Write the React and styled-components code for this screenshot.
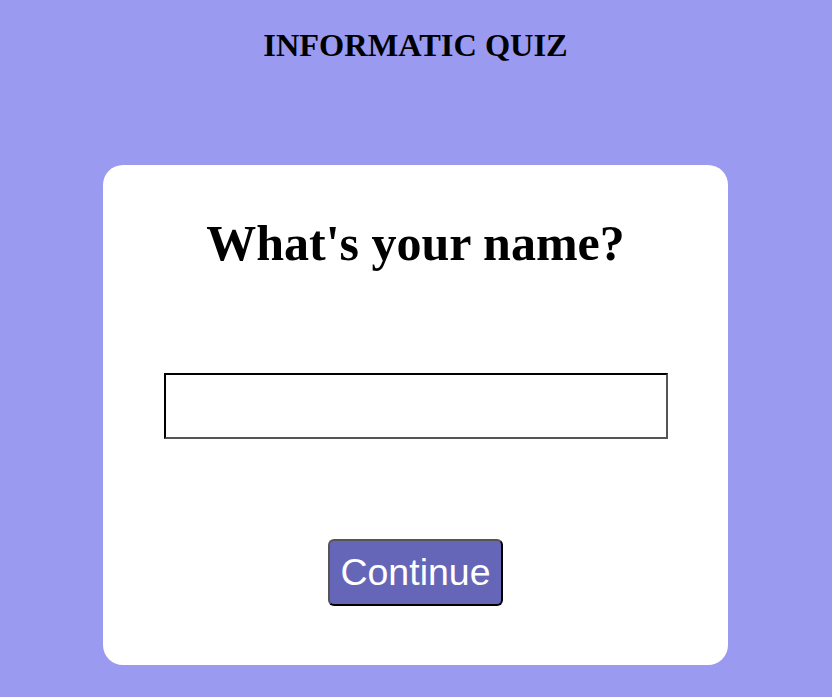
import React, { useState } from "react";
import styled, { createGlobalStyle } from "styled-components";

const GlobalStyle = createGlobalStyle`
  html, body {
    margin: 0;
    padding: 0;
    background: #999af0;
  }
  body {
    font-family: "Liberation Serif", "Times New Roman", serif;
  }
`;

const Page = styled.div`
  min-height: 697px;
  padding-right: 1px;
  box-sizing: border-box;
  display: flex;
  flex-direction: column;
  align-items: center;
`;

const Title = styled.h1`
  margin: 27px 0 0;
  font-size: 32.4px;
  font-weight: 700;
  line-height: 37px;
  color: #000;
`;

const Card = styled.div`
  margin-top: 101px;
  width: 625px;
  height: 500px;
  box-sizing: border-box;
  background: #fff;
  border-radius: 20px;
  display: flex;
  flex-direction: column;
  align-items: center;
`;

const Question = styled.h2`
  margin: 49px 0 0;
  font-size: 50px;
  line-height: 58px;
  font-weight: 700;
`;

const NameInput = styled.input`
  margin-top: 101px;
  width: 504px;
  height: 66px;
  box-sizing: border-box;
  border: 2px solid #555;
  border-top-color: #000;
  border-left-color: #000;
  font-size: 28px;
  padding: 0 10px;
  outline: none;
`;

const ContinueButton = styled.button`
  margin-top: 100px;
  height: 67px;
  padding: 0 10px;
  box-sizing: border-box;
  background: #6666b8;
  color: #fff;
  font-family: "Liberation Sans", Arial, sans-serif;
  font-size: 37.5px;
  border: 2px solid #000;
  border-top-color: #555;
  border-left-color: #555;
  border-radius: 6px;
  cursor: pointer;
`;

export default function App() {
  const [name, setName] = useState("");
  return (
    <>
      <GlobalStyle />
      <Page>
        <Title>INFORMATIC QUIZ</Title>
        <Card>
          <Question>What's your name?</Question>
          <NameInput value={name} onChange={(e) => setName(e.target.value)} />
          <ContinueButton>Continue</ContinueButton>
        </Card>
      </Page>
    </>
  );
}
